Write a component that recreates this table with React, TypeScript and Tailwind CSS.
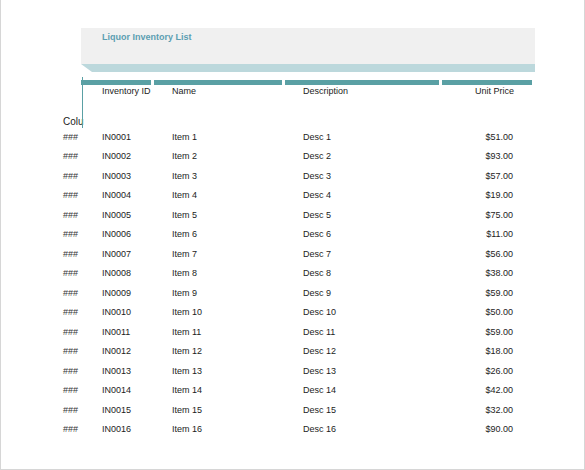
const rows = [
  { id: "IN0001", name: "Item 1", desc: "Desc 1", price: "$51.00" },
  { id: "IN0002", name: "Item 2", desc: "Desc 2", price: "$93.00" },
  { id: "IN0003", name: "Item 3", desc: "Desc 3", price: "$57.00" },
  { id: "IN0004", name: "Item 4", desc: "Desc 4", price: "$19.00" },
  { id: "IN0005", name: "Item 5", desc: "Desc 5", price: "$75.00" },
  { id: "IN0006", name: "Item 6", desc: "Desc 6", price: "$11.00" },
  { id: "IN0007", name: "Item 7", desc: "Desc 7", price: "$56.00" },
  { id: "IN0008", name: "Item 8", desc: "Desc 8", price: "$38.00" },
  { id: "IN0009", name: "Item 9", desc: "Desc 9", price: "$59.00" },
  { id: "IN0010", name: "Item 10", desc: "Desc 10", price: "$50.00" },
  { id: "IN0011", name: "Item 11", desc: "Desc 11", price: "$59.00" },
  { id: "IN0012", name: "Item 12", desc: "Desc 12", price: "$18.00" },
  { id: "IN0013", name: "Item 13", desc: "Desc 13", price: "$26.00" },
  { id: "IN0014", name: "Item 14", desc: "Desc 14", price: "$42.00" },
  { id: "IN0015", name: "Item 15", desc: "Desc 15", price: "$32.00" },
  { id: "IN0016", name: "Item 16", desc: "Desc 16", price: "$90.00" },
]

export default function App() {
  return (
    <div className="relative w-[585px] h-[470px] bg-white border-x border-b border-[#d6d6d6] overflow-hidden font-['Liberation_Sans',Arial,sans-serif] text-[9px] text-[#1c1c1c]">
      {/* Title band */}
      <div className="ml-[80px] mt-[28px] w-[454px]">
        <div className="h-[36px] bg-[#f0f0f0] pl-[21px] pt-[3px]">
          <span className="font-bold text-[#5c9eb2]">Liquor Inventory List</span>
        </div>
        <div className="h-[8px] bg-[#bcd8dc] [clip-path:polygon(0_0,100%_0,100%_100%,11px_100%)]" />
      </div>

      {/* Column bars */}
      <div className="ml-[80px] mt-[8px] flex gap-[3px]">
        <div className="h-[5px] w-[70px] bg-[#5aa0a4]" />
        <div className="h-[5px] w-[128px] bg-[#5aa0a4]" />
        <div className="h-[5px] w-[154px] bg-[#5aa0a4]" />
        <div className="h-[5px] w-[90px] bg-[#5aa0a4]" />
      </div>

      {/* Header labels */}
      <div className="flex items-center h-[12px] mt-px ml-[62px]">
        <div className="w-[39px]" />
        <div className="w-[70px]">Inventory ID</div>
        <div className="w-[131px]">Name</div>
        <div className="w-[150px]">Description</div>
        <div className="w-[61px] text-right">Unit Price</div>
      </div>

      {/* Clipped cell */}
      <div className="mt-[17px] ml-[62px] h-[12px] flex items-center">
        <div className="w-[19px] whitespace-nowrap text-[10px]">Colu</div>
      </div>

      {/* Rows */}
      <div className="ml-[62px] mt-px">
        {rows.map((r) => (
          <div key={r.id} className="flex items-center h-[19.47px]">
            <div className="w-[39px] text-[#333]">###</div>
            <div className="w-[70px]">{r.id}</div>
            <div className="w-[131px]">{r.name}</div>
            <div className="w-[150px]">{r.desc}</div>
            <div className="w-[60px] text-right">{r.price}</div>
          </div>
        ))}
      </div>

      {/* Selection edge line */}
      <div className="absolute left-[81px] top-[77px] w-px h-[51px] bg-[#5aa0a4]" />
    </div>
  )
}
